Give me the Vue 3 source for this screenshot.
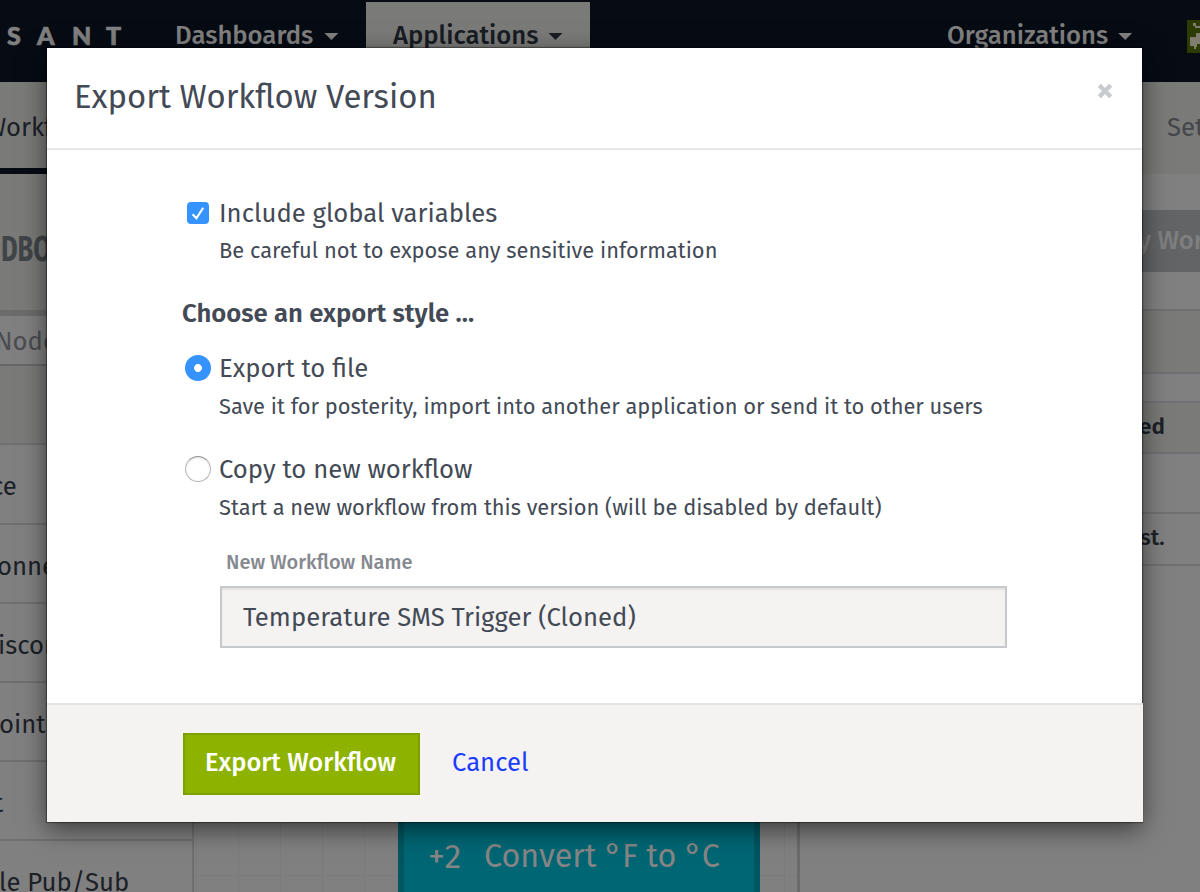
<script setup>
import { ref } from 'vue'

const nodes = [
  { text: 'ce', cut: 9 },
  { text: 'onnect', cut: 3 },
  { text: 'isconn', cut: 2 },
  { text: 'oint', cut: 1 },
  { text: 't', cut: 6 },
  { text: 'le Pub/Sub', cut: 1 }
]
const includeGlobals = ref(true)
const exportStyle = ref('file')
const workflowName = ref('Temperature SMS Trigger (Cloned)')
</script>

<template>
  <div class="screen">
    <div class="page">
      <nav class="topbar">
        <div class="logo"><span>S</span><span>A</span><span>N</span><span>T</span></div>
        <div class="tab dashboards">Dashboards<i class="caret"></i></div>
        <div class="tab applications">Applications<i class="caret"></i></div>
        <div class="tab organizations">Organizations<i class="caret"></i></div>
        <svg class="avatar" width="13" height="33" viewBox="0 0 13 33">
          <rect width="13" height="33" fill="#2c3b00" />
          <path d="M6 3h3v3h4v2H8V6H6zM9 13h4v11h-3v3h-1v2H7v-3H3v-9h6z" fill="#807d70" />
        </svg>
      </nav>

      <div class="subnav">
        <div class="current">Workflows</div>
        <div class="settings">Settings</div>
      </div>

      <div class="workspace">
        <aside class="palette">
          <div class="palette-title"><span>NDBOX</span></div>
          <div class="palette-search">Nodes</div>
          <div class="palette-group"></div>
          <div v-for="n in nodes" :key="n.text" class="node-row">
            <span :style="{ marginLeft: -n.cut + 'px' }">{{ n.text }}</span>
          </div>
        </aside>
        <main class="canvas">
          <div class="canvas-node"><span class="badge">+2</span><span>Convert °F to °C</span></div>
        </main>
        <aside class="details">
          <div class="deploy"><span>y Workflow</span></div>
          <div class="band"></div>
          <div class="thead">ed</div>
          <div class="trow"></div>
          <div class="tlast">st.</div>
        </aside>
      </div>
    </div>

    <section class="modal">
      <header class="modal-head">
        <h1>Export Workflow Version</h1>
        <svg class="close" width="16" height="16" viewBox="0 0 16 16">
          <path d="M2.3 2.3 13.7 13.7M13.7 2.3 2.3 13.7" stroke="#c8cacd" stroke-width="4.4" />
        </svg>
      </header>

      <div class="modal-body">
        <div class="option" @click="includeGlobals = !includeGlobals">
          <svg class="check" width="22" height="22" viewBox="0 0 22 22">
            <rect width="22" height="22" rx="4" fill="#3593ff" />
            <path v-if="includeGlobals" d="M5.6 12.2 9.4 16.3 16.2 5.8" fill="none" stroke="#fff" stroke-width="2.1" />
          </svg>
          <span class="label">Include global variables</span>
          <span class="hint">Be careful not to expose any sensitive information</span>
        </div>

        <h2>Choose an export style ...</h2>

        <div class="option file" @click="exportStyle = 'file'">
          <i class="radio" :class="{ on: exportStyle === 'file' }"></i>
          <span class="label">Export to file</span>
          <span class="hint">Save it for posterity, import into another application or send it to other users</span>
        </div>

        <div class="option copy" @click="exportStyle = 'copy'">
          <i class="radio" :class="{ on: exportStyle === 'copy' }"></i>
          <span class="label">Copy to new workflow</span>
          <span class="hint">Start a new workflow from this version (will be disabled by default)</span>
        </div>

        <div class="field">
          <label>New Workflow Name</label>
          <div class="input">{{ workflowName }}</div>
        </div>
      </div>

      <footer class="modal-foot">
        <button class="primary">Export Workflow</button>
        <a class="cancel">Cancel</a>
      </footer>
    </section>
  </div>
</template>

<style>
body { background: #808080; }
</style>

<style scoped>
* { box-sizing: border-box; }
.screen {
  position: relative;
  width: 1200px;
  height: 892px;
  overflow: hidden;
  background: #808080;
  color: #1c2027;
  font-family: "Fira Sans", "Noto Sans", "Open Sans", sans-serif;
  font-size: 25.7px;
  white-space: nowrap;
}
.page { height: 892px; display: flex; flex-direction: column; }

/* top navigation */
.topbar {
  flex: none;
  height: 82px;
  display: flex;
  background: #060b14;
  color: #808080;
  font-weight: 500;
  line-height: 72px;
  overflow: hidden;
}
.logo {
  width: 175px;
  padding-left: 7px;
  display: grid;
  grid-template-columns: 30px 35px 34px 30px;
  font: 900 25px/71px Lato, sans-serif;
  -webkit-text-stroke: 0.7px #808080;
}
.tab { display: flex; }
.dashboards { width: 191px; }
.applications {
  width: 224px;
  height: 80px;
  margin-top: 2px;
  padding-left: 27px;
  line-height: 68px;
  background: #7a7a79;
  color: #181c23;
}
.organizations { margin-left: 357px; width: 240px; }
.caret {
  width: 14px;
  height: 7px;
  margin: 33px 0 0 11px;
  background: currentColor;
  clip-path: polygon(0 0, 100% 0, 50% 100%);
}
.applications .caret { margin: 31px 0 0 10px; }
.organizations .caret { margin-left: 10px; }
.avatar { flex: none; margin-top: 20px; }

.subnav {
  flex: none;
  height: 92px;
  display: flex;
  justify-content: space-between;
  background: #7a7a79;
  line-height: 92px;
  overflow: hidden;
}
.current { width: 120px; text-indent: -15px; border-bottom: 6px solid #060b14; }
.settings { width: 33px; color: #43464a; }

/* workspace */
.workspace { flex: 1; display: grid; grid-template-columns: 194px 603px 1fr; min-height: 0; }
.palette { border-right: 2px solid #6e6f71; overflow: hidden; }
.palette-title {
  height: 142px;
  border-bottom: 6px solid #6c6c6c;
  background: #7a7a79;
  color: #414447;
  font: 700 37px/150px "Fira Sans", "Noto Sans", sans-serif;
}
.palette-title span {
  display: inline-block;
  margin-left: -16px;
  transform: scaleX(0.69);
  transform-origin: 0 50%;
}
.palette-search {
  height: 50px;
  border-bottom: 2px solid #66676a;
  background: #808080;
  color: #4a4c50;
  line-height: 51px;
  text-indent: -5px;
}
.palette-group { height: 79px; border-bottom: 2px solid #6e6f71; background: #7a7a79; }
.node-row { height: 79px; border-bottom: 2px solid #6e6f71; line-height: 83px; }
.palette-group + .node-row { height: 80px; }

.canvas {
  padding-left: 204px;
  background:
    repeating-linear-gradient(90deg, transparent 0 2px, #7b7b7d 2px 3px, transparent 3px 42px),
    repeating-linear-gradient(180deg, transparent 0 21px, #7b7b7d 21px 22px, transparent 22px 40px),
    #808080;
}
.canvas-node {
  width: 362px;
  height: 100px;
  margin-top: 631px;
  padding-left: 24px;
  display: flex;
  border: 6px solid #005661;
  border-top-width: 0;
  background: #006673;
  color: #858585;
  font-size: 32.3px;
  line-height: 103px;
}
.badge { width: 56px; font-size: 34px; letter-spacing: 1.5px; }
.details { border-left: 3px solid #6a6b6d; overflow: hidden; }
.deploy { padding: 36px 0 37px; border-bottom: 2px solid #6e6f71; }
.deploy span {
  display: block;
  height: 62px;
  padding-left: 338px;
  background: #636466;
  color: #7f7f7f;
  font-weight: 500;
  line-height: 62px;
}
.band { height: 63px; border-bottom: 2px solid #707172; background: #7a7a79; }
.thead, .tlast { padding-left: 339px; font-weight: 600; font-size: 22.5px; }
.thead {
  height: 53px;
  margin-top: 27px;
  border: solid #707172;
  border-width: 2px 0;
  background: #7a7a79;
  line-height: 48px;
}
.trow { height: 60px; border-bottom: 2px solid #707172; }
.tlast { height: 52px; padding-left: 340px; border-bottom: 2px solid #707172; line-height: 48px; font-weight: 500; }

/* dialog */
.modal {
  position: absolute;
  left: 47px;
  top: 48px;
  width: 1095px;
  height: 774px;
  display: flex;
  flex-direction: column;
  background: #fff;
  color: #434a56;
  box-shadow: 0 0 1px 1px rgba(0, 0, 0, 0.35), 0 7px 24px rgba(0, 0, 0, 0.55);
}
.modal-head {
  flex: none;
  height: 102px;
  padding: 0 29px 0 27px;
  display: flex;
  justify-content: space-between;
  border-bottom: 2px solid #e7e8e9;
}
h1 { margin: 0; font-size: 32.9px; font-weight: 400; line-height: 98px; }
.close { margin-top: 35px; }
.modal-body { flex: 1; padding: 44px 135px 0; }
.option {
  display: grid;
  grid-template-columns: 37px 1fr;
  grid-template-rows: 38px 38px;
  line-height: 40px;
}
.label, .hint { grid-column: 2; }
.hint { font-size: 21.85px; }
.option:first-child .hint { line-height: 38px; }
.check { margin: 8px 0 0 5px; }
.radio {
  width: 26px;
  height: 26px;
  margin: 6px 0 0 3px;
  border: 1.5px solid #b4b6b9;
  border-top-color: #909398;
  border-radius: 50%;
  background: #fff;
  box-shadow: inset 0 1px 2px rgba(0, 0, 0, 0.12);
}
.radio.on {
  border: 0;
  background: radial-gradient(circle, #fff 3.6px, #3593ff 4.3px);
  box-shadow: none;
}
h2 { height: 38px; margin: 24px 0 0; font-size: 25.7px; font-weight: 600; line-height: 40px; }
.file { margin-top: 17px; }
.copy { margin-top: 25px; }
.field { margin: 17px 0 0 38px; }
label { display: block; padding-left: 6px; color: #868990; font-size: 19.98px; font-weight: 500; line-height: 38px; }
.input {
  height: 62px;
  width: 787px;
  margin-top: 5px;
  padding-left: 21px;
  border: 2px solid #c6c8cb;
  background: #f5f3f2;
  box-shadow: inset 0 2px 2px rgba(0, 0, 0, 0.07);
  line-height: 59px;
}
.modal-foot {
  flex: none;
  width: 1096px;
  height: 119px;
  padding: 28px 0 0 136px;
  display: flex;
  align-items: flex-start;
  border-top: 2px solid #e2e3e4;
  background: #f5f3f2;
}
.primary {
  width: 237px;
  height: 62px;
  padding: 0 2px 3px 0;
  border: 2px solid #7da000;
  background: #8db300;
  color: #fff;
  font: 500 25.5px "Fira Sans", "Noto Sans", sans-serif;
}
.cancel { margin-left: 32px; color: #1b3cff; line-height: 59px; }
</style>
